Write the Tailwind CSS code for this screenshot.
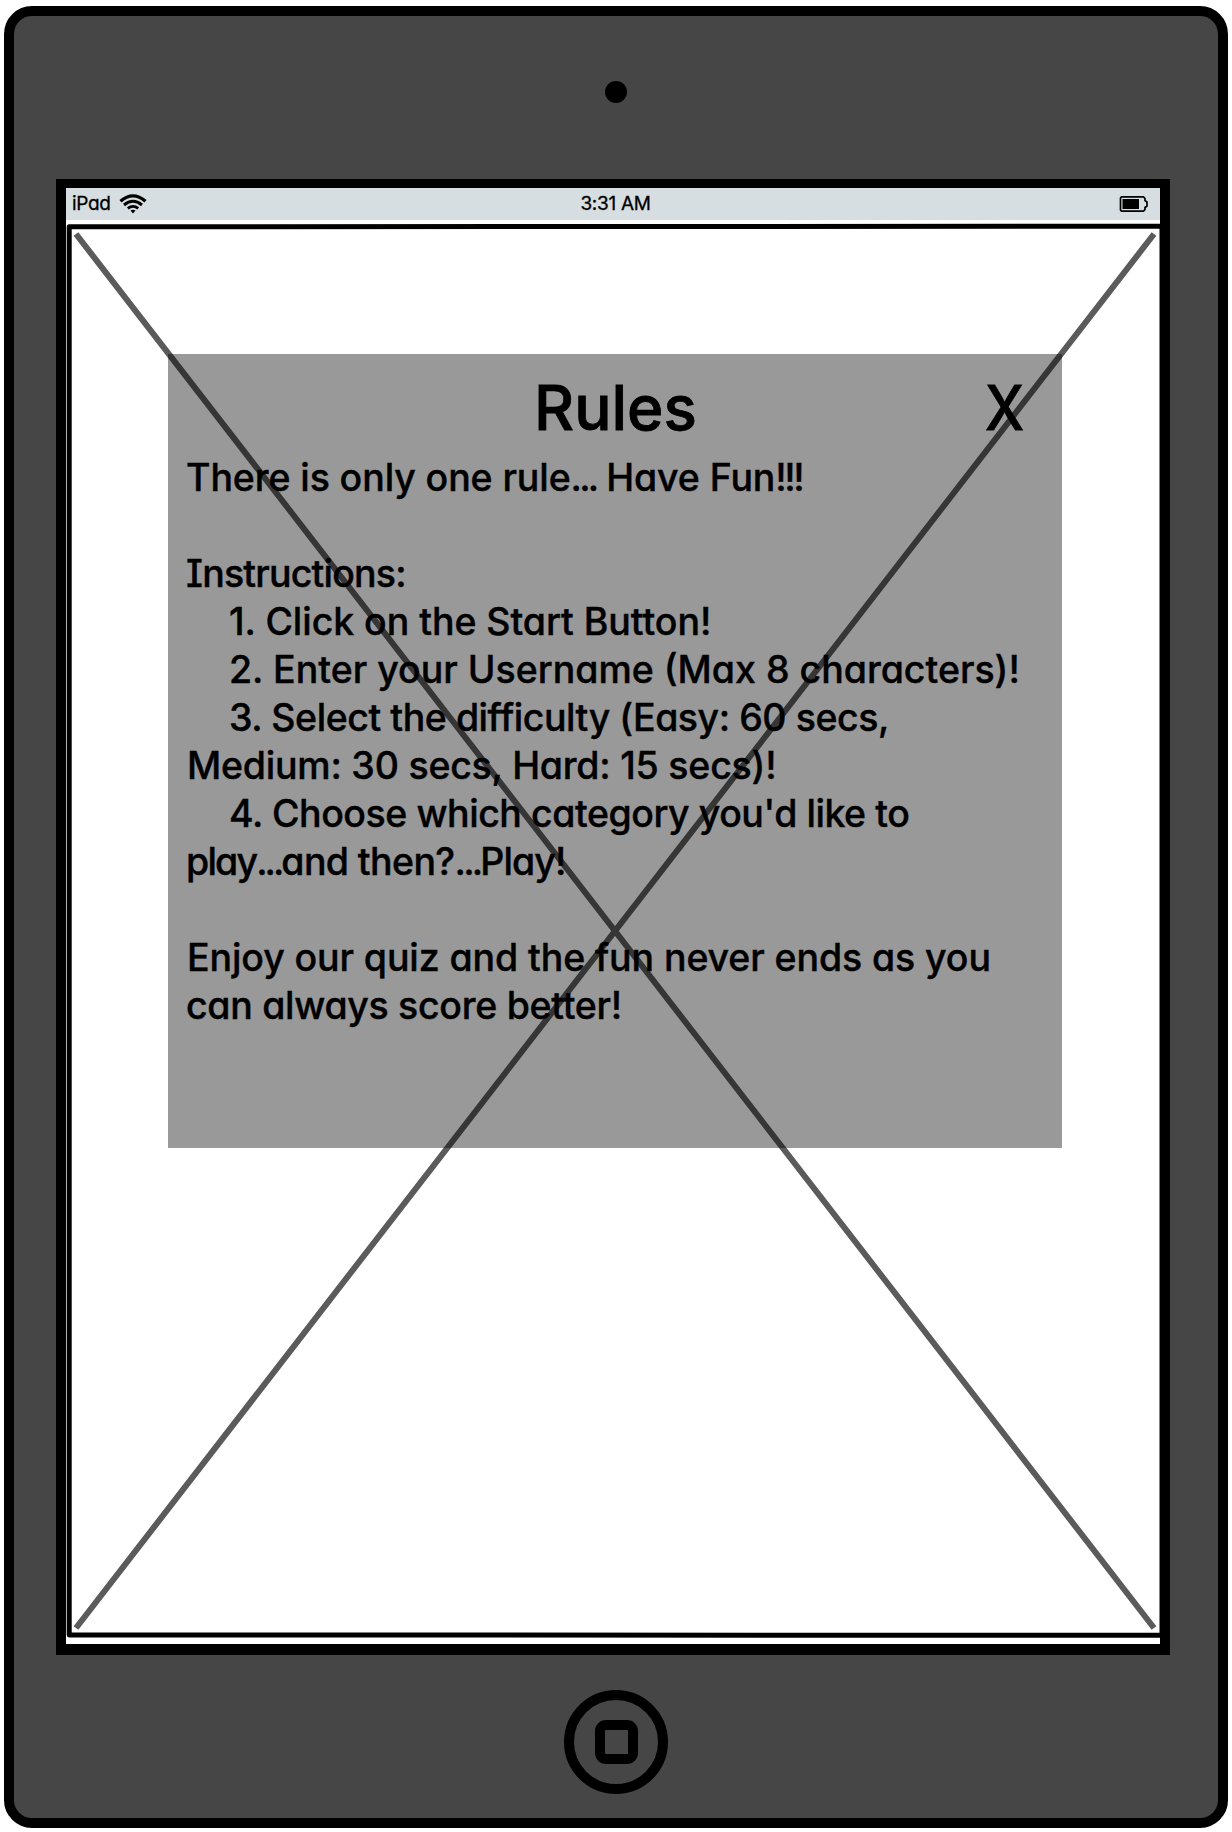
<!DOCTYPE html>
<html lang="en">
<head>
<meta charset="utf-8">
<title>Rules</title>
<script src="https://cdn.jsdelivr.net/npm/@tailwindcss/browser@4"></script>
</head>
<body class="bg-white font-['Inter',sans-serif] text-black [font-feature-settings:'cv11']">
<div class="w-[1232px] h-[1832px] pl-1 pt-1.5 overflow-hidden">
  <div class="w-[1224px] h-[1822px] rounded-[28px] border-10 border-black bg-[#464646] flex flex-col">
    <div class="h-[163px] flex justify-center pt-[65px]">
      <div class="size-[22px] rounded-full bg-black"></div>
    </div>
    <div class="relative ml-[42px] w-[1114px] h-[1476px] border-x-10 border-t-9 border-b-11 border-black bg-white">
      <div class="h-8 bg-[#d7dee1] grid grid-cols-3 items-center pl-[5px] text-[19px] leading-8 [-webkit-text-stroke:0.3px]">
        <div class="flex items-center gap-[8px] pl-px"><span class="tracking-[-0.3px]">iPad</span>
          <svg class="w-[28px] h-[20px]" viewBox="0 0 28 20" fill="none" stroke="#000"><path d="M1.500 7.300Q14-3.500 26.500 7.300" stroke-width="3.300"/><path d="M5 11Q14 3.500 23 11" stroke-width="3"/><path d="M8.800 14.400Q14 10.300 19.200 14.400" stroke-width="2.800"/><path d="M11.500 16.500Q14 15 16.500 16.500L14 19.500Z" fill="#000" stroke="none"/></svg>
        </div>
        <span class="text-center tracking-[-0.3px]">3:31 AM</span>
        <svg class="justify-self-end mr-[11px] w-[30px] h-[18px]" viewBox="0 0 30 18" fill="none" stroke="#000" stroke-width="1.700"><path d="M2.500 1.800H24.500L26 3.500V5.500L28 7V11L26 12.500V14.500L24.500 16.200H2.500L1.500 15V3Z"/><path d="M3.500 4H20V14H3.500Z" fill="#000" stroke="none"/></svg>
      </div>
      <svg class="absolute left-0 top-8 w-[1098px] h-[1424px]" viewBox="66 220 1098 1424" fill="none"><path d="M69.200 226.700L1162 226.300V1635.300L69.200 1635Z" stroke="#000" stroke-width="5" stroke-linejoin="round"/><path d="M76 234L1154 1628M1154 234L76 1628" stroke="#5b5b5c" stroke-width="6"/></svg>
      <main class="relative ml-[102px] mt-[134px] w-[894px] h-[794px] bg-black/40 pl-[18px] pt-4 font-medium">
        <div class="relative h-[84px] leading-[76px] text-[62px] [-webkit-text-stroke:0.8px]">
          <h1 class="pl-[348px]">Rules</h1>
          <button class="absolute left-[799px] top-0 origin-left scale-x-90" aria-label="Close">X</button>
        </div>
        <div class="text-[37.500px] leading-12 whitespace-nowrap [-webkit-text-stroke:0.4px]">
          <p class="tracking-[-0.1px]">There is only one rule<span class="tracking-[-2.800px]">...</span> Have Fun<span class="tracking-[-2.500px]">!!!</span></p>
          <p class="mt-12 tracking-[-0.8px]"><span class="[font-feature-settings:'cv08']">I</span>nstructions:</p>
          <p class="pl-[43px] tracking-[-0.050px]">1. Click on the Start Button!</p>
          <p class="pl-[43px]">2. Enter your Username (Max 8 characters)!</p>
          <p class="pl-[43px] tracking-[-0.450px]">3. Select the difficulty (Easy: 60 secs,</p>
          <p class="pl-px tracking-[-0.220px]">Medium: 30 secs, Hard: 15 secs)!</p>
          <p class="pl-[43px] tracking-[-0.450px]">4. Choose which category you'd like to</p>
          <p><span class="tracking-[-1.800px]">play<span class="tracking-[-3px]">...</span></span><span class="tracking-[-0.600px]">and then?<span class="tracking-[-2.800px]">...</span></span><span class="tracking-[-0.900px]">Play!</span></p>
          <p class="mt-12 pl-px tracking-[-0.1px]">Enjoy our quiz and the fun never ends as you</p>
          <p class="tracking-[-0.300px]">can always score better!</p>
        </div>
      </main>
    </div>
    <div class="flex justify-center pt-[34px]">
      <div class="size-[104px] mt-px rounded-full border-10 border-black flex items-center justify-center">
        <div class="w-[43px] h-11 rounded-[11px] border-10 border-black"></div>
      </div>
    </div>
  </div>
</div>
</body>
</html>
